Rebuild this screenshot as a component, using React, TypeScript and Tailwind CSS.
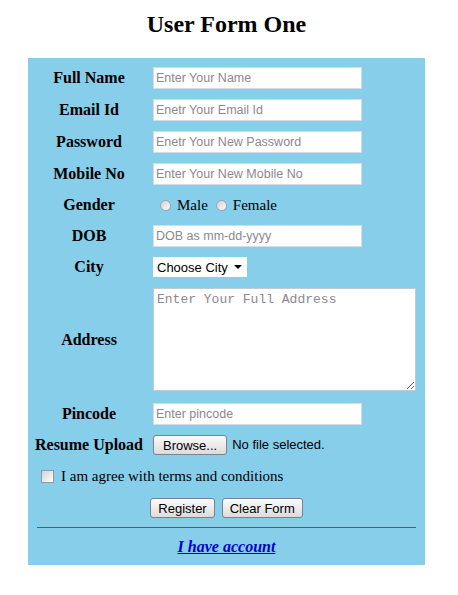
import { useState } from "react";

const labelCls =
  "w-[122px] shrink-0 text-center font-['Liberation_Serif',serif] text-[16px] font-bold text-black";
const inputCls =
  "h-[22px] w-[209px] border border-[#d6dde2] bg-white px-[2px] font-['Liberation_Sans',sans-serif] text-[12.5px] text-black outline-none placeholder:text-[#8d8792]";
const btnCls =
  "h-[20px] rounded-[3px] border border-[#7d8189] bg-gradient-to-b from-[#fbfbfb] to-[#dcdcdc] px-[7px] font-['Liberation_Sans',sans-serif] text-[13px] leading-none text-black";

const cities = ["Choose City", "Delhi", "Mumbai", "Kolkata"];

function Row({ label, children, className = "h-[22px]" }: { label: string; children: React.ReactNode; className?: string }) {
  return (
    <div className={`flex items-center gap-[3px] ${className}`}>
      <div className={labelCls}>{label}</div>
      {children}
    </div>
  );
}

function Radio({ label, checked, onClick }: { label: string; checked: boolean; onClick: () => void }) {
  return (
    <label className="flex cursor-pointer items-center gap-[6px]" onClick={onClick}>
      <span className="flex h-[11px] w-[11px] items-center justify-center rounded-full border border-[#9aa3ab] bg-gradient-to-br from-[#cfcfcf] to-white">
        {checked && <span className="h-[5px] w-[5px] rounded-full bg-[#333]" />}
      </span>
      <span className="font-['Liberation_Serif',serif] text-[15px] text-black">{label}</span>
    </label>
  );
}

export default function App() {
  const [gender, setGender] = useState("");
  const [agree, setAgree] = useState(false);
  const [city, setCity] = useState(cities[0]);

  return (
    <div className="min-h-[595px] w-[453px] bg-white">
      <h2 className="pt-[10px] text-center font-['Liberation_Serif',serif] text-[24px] font-bold leading-[28px] text-black">
        User Form One
      </h2>

      <form className="mx-[28px] mt-[20px] flex w-[397px] flex-col bg-[#87ceeb] pb-[8px] pt-[9px]">
        <div className="flex flex-col gap-[10px]">
          <Row label="Full Name">
            <input className={inputCls} placeholder="Enter Your Name" />
          </Row>
          <Row label="Email Id">
            <input className={inputCls} placeholder="Enetr Your Email Id" />
          </Row>
          <Row label="Password">
            <input type="password" className={inputCls} placeholder="Enetr Your New Password" />
          </Row>
          <Row label="Mobile No">
            <input className={inputCls} placeholder="Enter Your New Mobile No" />
          </Row>
          <Row label="Gender" className="h-[20px]">
            <div className="flex items-center gap-[8px] pl-[7px]">
              <Radio label="Male" checked={gender === "m"} onClick={() => setGender("m")} />
              <Radio label="Female" checked={gender === "f"} onClick={() => setGender("f")} />
            </div>
          </Row>
          <Row label="DOB">
            <input className={inputCls} placeholder="DOB as mm-dd-yyyy" />
          </Row>
          <Row label="City" className="h-[20px]">
            <div className="relative flex h-[20px] w-[94px] items-center bg-white pl-[4px]">
              <span className="font-['Liberation_Sans',sans-serif] text-[13px] leading-none text-black">{city}</span>
              <span className="pointer-events-none absolute right-[5px] top-[8px] h-0 w-0 border-x-[4px] border-t-[4px] border-x-transparent border-t-black" />
              <select
                value={city}
                onChange={(e) => setCity(e.target.value)}
                className="absolute inset-0 h-full w-full cursor-pointer opacity-0"
              >
                {cities.map((c) => (
                  <option key={c}>{c}</option>
                ))}
              </select>
            </div>
          </Row>
          <Row label="Address" className="h-[106px]">
            <textarea
              className="mb-[2px] h-[103px] w-[263px] resize border border-[#c4cbd0] bg-white px-[3px] py-[1px] font-['Liberation_Mono',monospace] text-[13px] text-black outline-none placeholder:text-[#8d8792]"
              placeholder="Enter Your Full Address"
            />
          </Row>
          <Row label="Pincode">
            <input className={inputCls} placeholder="Enter pincode" />
          </Row>
          <Row label="Resume Upload" className="h-[20px]">
            <label className="flex items-center gap-[5px]">
              <span className={`${btnCls} flex items-center !px-[9px]`}>Browse...</span>
              <span className="font-['Liberation_Sans',sans-serif] text-[13px] text-black">No file selected.</span>
              <input type="file" className="hidden" />
            </label>
          </Row>
          <label className="flex h-[22px] cursor-pointer items-center gap-[7px] pl-[13px]" onClick={() => setAgree(!agree)}>
            <span className="flex h-[13px] w-[13px] items-center justify-center border border-[#8f9aa3] bg-gradient-to-br from-[#d2d2d2] to-white text-[10px] leading-none">
              {agree ? "✓" : ""}
            </span>
            <span className="font-['Liberation_Serif',serif] text-[15px] text-black">I am agree with terms and conditions</span>
          </label>
          <div className="flex h-[22px] items-center justify-center gap-[7px]">
            <button type="button" className={btnCls}>Register</button>
            <button type="reset" className={btnCls}>Clear Form</button>
          </div>
        </div>
        <div className="mx-[9px] mt-[8px] h-[1px] bg-[#ee1c24]" />
        <div className="mt-[9px] flex h-[20px] items-center justify-center">
          <a href="#" className="font-['Liberation_Serif',serif] text-[16px] font-bold italic text-[#0000cc] underline">
            I have account
          </a>
        </div>
      </form>
    </div>
  );
}
